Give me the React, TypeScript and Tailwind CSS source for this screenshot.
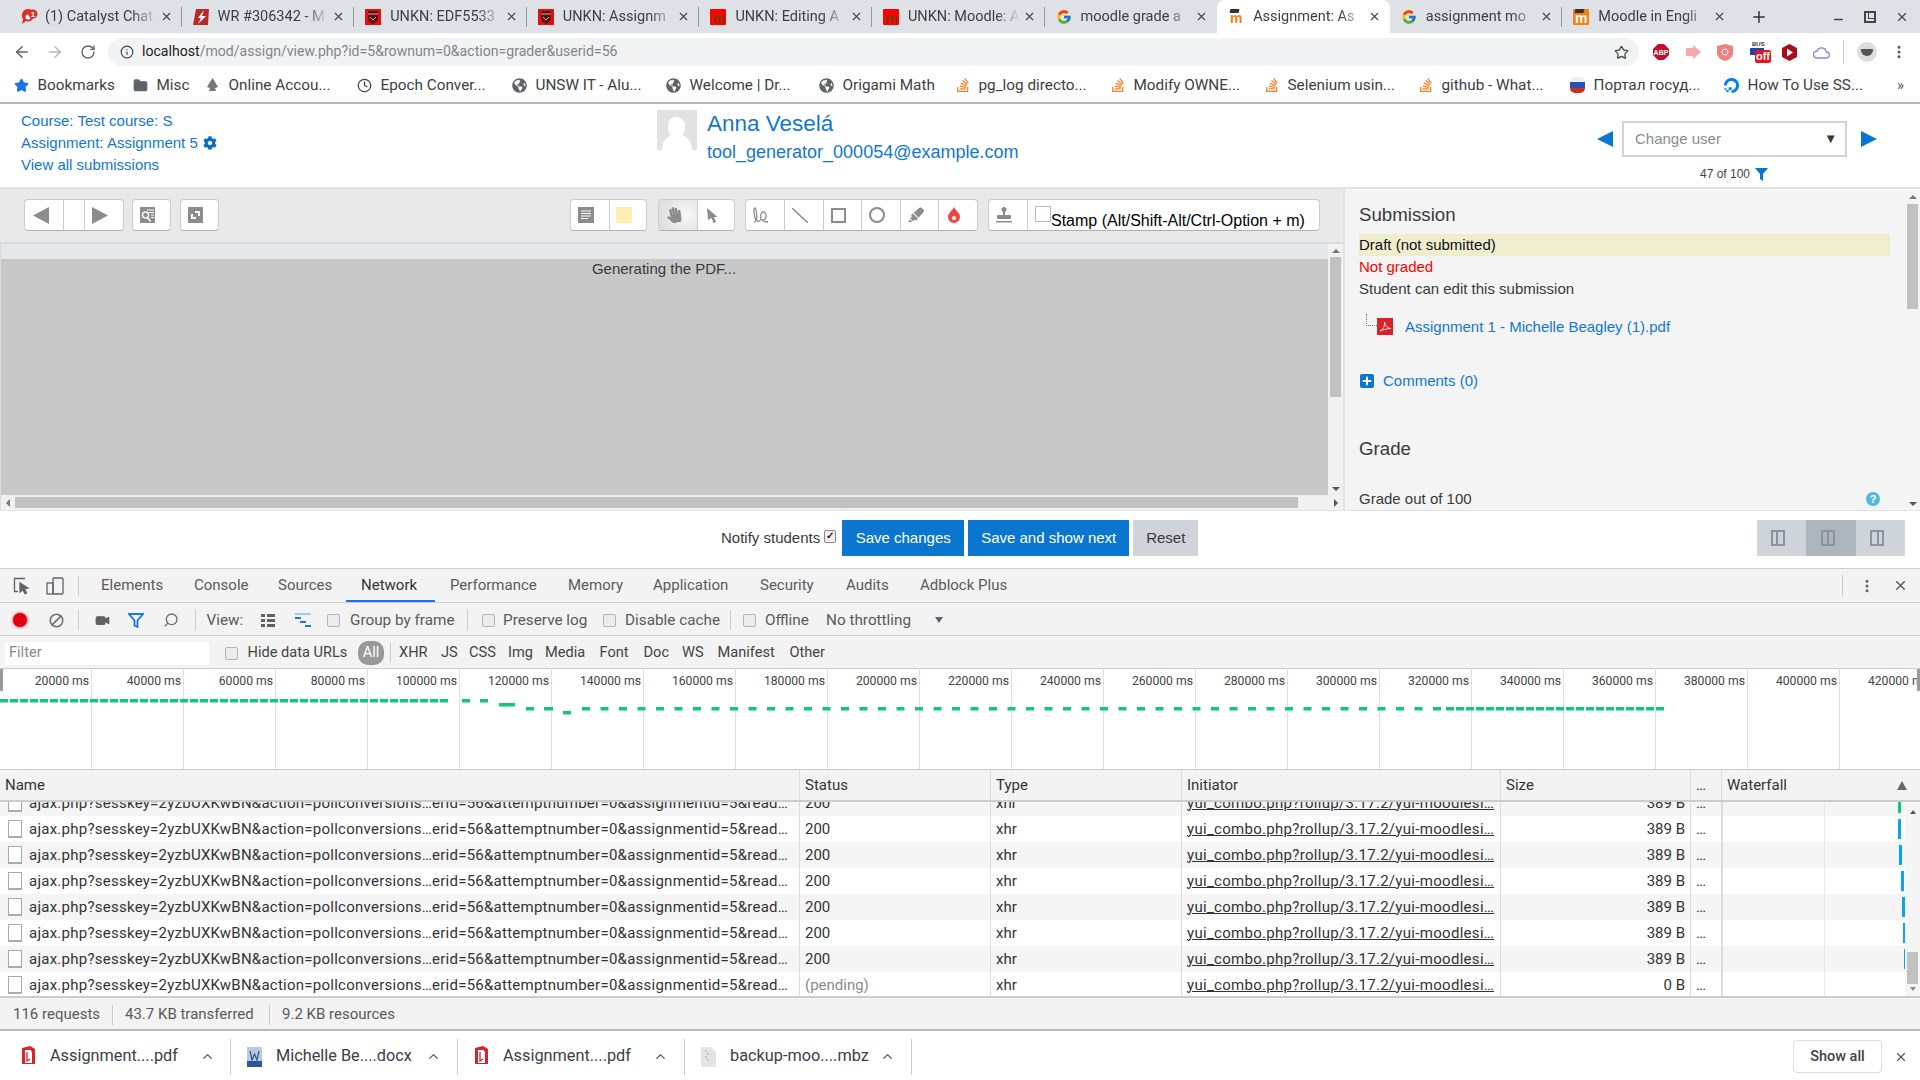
import React from 'react';
import {
  ArrowLeft,
  ArrowRight,
  RotateCw,
  Info,
  Star,
  Minus,
  X,
  Plus,
  MoreVertical,
  Folder,
  ChevronUp,
  Video,
  Search,
  Ban,
  Clock,
} from 'lucide-react';
import { FcGoogle } from 'react-icons/fc';
import { FaCog, FaGlobeAmericas, FaHandPaper, FaHighlighter, FaStackOverflow } from 'react-icons/fa';
import { SiDigitalocean } from 'react-icons/si';

const chrome = "[font-family:Roboto,'Noto_Sans',sans-serif]";
const arial = "[font-family:'Liberation_Sans',Arial,sans-serif]";

const Crest = () => (
  <svg width="16" height="16" viewBox="0 0 16 16">
    <rect width="16" height="16" fill="#e01010" />
    <path d="M3 2h10v7c0 3-3 5-5 6-2-1-5-3-5-6z" fill="#5a1010" />
    <path d="M3 5h10M5 8l3 3 3-3" stroke="#e8a0a0" strokeWidth="1" fill="none" />
  </svg>
);

const MoodleIcon = ({ bg, color, cap }: { bg: string; color: string; cap?: boolean }) => (
  <span className={`relative flex h-4 w-4 items-end justify-center rounded-[1px] ${bg}`}>
    <span className={`${arial} text-[14px] leading-[14px] font-bold ${color}`}>m</span>
    {cap && <span className="absolute top-0 left-[2px] h-[4px] w-[9px] -skew-x-12 bg-[#333]" />}
  </span>
);

const tabs: { title: string; icon: React.ReactNode; active?: boolean }[] = [
  {
    title: '(1) Catalyst Chat',
    icon: (
      <svg width="18" height="16" viewBox="0 0 18 16">
        <path d="M2 5a6 6 0 0 1 12 2 6 6 0 0 1-8 5l-4 3 1-5a6 6 0 0 1-1-5z" fill="#d9302c" />
        <circle cx="8" cy="8" r="2.500" fill="#fff" />
        <circle cx="13" cy="5" r="4.500" fill="#d9302c" />
        <text x="13" y="8" fontSize="8" fontWeight="700" fill="#fff" textAnchor="middle" fontFamily="Liberation Sans">1</text>
      </svg>
    ),
  },
  {
    title: 'WR #306342 - M',
    icon: (
      <svg width="16" height="16" viewBox="0 0 16 16">
        <path d="M3 0h13l-1 16H0z" fill="#b92b2b" />
        <path d="M11 1 5 9h3l-3 6 8-8H9z" fill="#fff" />
      </svg>
    ),
  },
  { title: 'UNKN: EDF5533', icon: <Crest /> },
  { title: 'UNKN: Assignm', icon: <Crest /> },
  { title: 'UNKN: Editing A', icon: <MoodleIcon bg="bg-[#f00]" color="text-[#7a3b00]" /> },
  { title: 'UNKN: Moodle: A', icon: <MoodleIcon bg="bg-[#f00]" color="text-[#7a3b00]" /> },
  { title: 'moodle grade a', icon: <FcGoogle size={16} /> },
  { title: 'Assignment: As', icon: <MoodleIcon bg="bg-white" color="text-[#f98012]" cap />, active: true },
  { title: 'assignment mo', icon: <FcGoogle size={16} /> },
  { title: 'Moodle in Engli', icon: <MoodleIcon bg="bg-[#f98012]" color="text-white" cap /> },
];

const Globe = () => <FaGlobeAmericas size={15} className="text-[#5f6368]" />;
const So = () => <FaStackOverflow size={16} className="text-[#f48024]" />;

const bookmarks: { w: number; label: string; icon: React.ReactNode }[] = [
  { w: 119, label: 'Bookmarks', icon: <Star size={15} className="fill-[#1a73e8] text-[#1a73e8]" /> },
  { w: 72, label: 'Misc', icon: <Folder size={15} className="fill-[#5f6368] text-[#5f6368]" /> },
  {
    w: 152,
    label: 'Online Accou...',
    icon: (
      <svg width="15" height="16" viewBox="0 0 15 16">
        <path d="M7.5 1 10 5l3 5-3 1 1 3H4l1-3-3-1 3-5z" fill="#777" />
      </svg>
    ),
  },
  { w: 155, label: 'Epoch Conver...', icon: <Clock size={15} className="text-[#444]" /> },
  { w: 154, label: 'UNSW IT - Alu...', icon: <Globe /> },
  { w: 153, label: 'Welcome | Dr...', icon: <Globe /> },
  { w: 136, label: 'Origami Math', icon: <Globe /> },
  { w: 155, label: 'pg_log directo...', icon: <So /> },
  { w: 154, label: 'Modify OWNE...', icon: <So /> },
  { w: 154, label: 'Selenium usin...', icon: <So /> },
  { w: 152, label: 'github - What...', icon: <So /> },
  {
    w: 154,
    label: 'Портал госуд...',
    icon: (
      <span className="flex h-4 w-[15px] flex-col overflow-hidden rounded-[5px]">
        <span className="flex-1 bg-[#eee]" />
        <span className="flex-1 bg-[#2a50b0]" />
        <span className="flex-1 bg-[#d52b1e]" />
      </span>
    ),
  },
  { w: 173, label: 'How To Use SS...', icon: <SiDigitalocean size={15} className="text-[#0080ff]" /> },
];

const TabStrip = () => (
  <div className={`${chrome} flex h-[33px] items-end bg-[#dee1e6] pl-[9px] text-[14.5px] text-[#3c4043]`}>
    {tabs.map((t, i) => (
      <div
        key={t.title}
        className={`flex h-[33px] w-[172.6px] shrink-0 items-center pr-[9px] pl-[11px] ${
          t.active ? 'rounded-t-[8px] bg-white' : ''
        } ${i < 9 && !t.active && !tabs[i + 1].active ? 'relative after:absolute after:top-[7px] after:right-0 after:h-[20px] after:w-px after:bg-[#999]' : 'relative'}`}
      >
        <span className="flex w-[25px] shrink-0 items-center">{t.icon}</span>
        <span className="flex-1 overflow-hidden whitespace-nowrap [mask-image:linear-gradient(to_right,black_78%,transparent)]">
          {t.title}
        </span>
        <X size={13} strokeWidth={2} className="ml-[3px] shrink-0 text-[#444]" />
      </div>
    ))}
    <div className="flex h-[33px] flex-1 items-center pl-[15px]">
      <Plus size={18} className="text-[#333]" />
      <div className="ml-auto flex items-center gap-[19px] pr-[11px]">
        <Minus size={13} strokeWidth={2.5} className="mt-[6px] text-[#444]" />
        <span className="relative h-[12px] w-[12px] border-2 border-[#444] after:absolute after:-top-[2px] after:left-[2px] after:h-[8px] after:w-[8px] after:border after:border-[#444]" />
        <X size={14} strokeWidth={2} className="text-[#444]" />
      </div>
    </div>
  </div>
);

const AddressBar = () => (
  <div className="flex h-[34px] items-center bg-white pt-[4px] pr-[13px] pl-[13px]">
    <ArrowLeft size={18} className="shrink-0 text-[#5f6368]" />
    <ArrowRight size={18} className="ml-[15px] shrink-0 text-[#b5b7ba]" />
    <RotateCw size={16} className="ml-[16px] shrink-0 text-[#5f6368]" />
    <div className={`${chrome} ml-[12px] flex h-[28px] min-w-0 flex-1 items-center rounded-full bg-[#f1f3f4] pr-[10px] pl-[12px] text-[14.1px]`}>
      <Info size={14} className="text-[#444]" />
      <span className="ml-[8px] text-[#202124]">localhost</span>
      <span className="text-[#80868b]">/mod/assign/view.php?id=5&amp;rownum=0&amp;action=grader&amp;userid=56</span>
      <Star size={15} className="ml-auto text-[#444]" />
    </div>
    <div className="ml-[14px] flex shrink-0 items-center">
      <svg width="16" height="16" viewBox="0 0 16 16">
        <path d="M5 0h6l5 5v6l-5 5H5l-5-5V5z" fill="#c70d2c" />
        <text x="8" y="11" fontSize="7" fontWeight="700" fill="#fff" textAnchor="middle" fontFamily="Liberation Sans">ABP</text>
      </svg>
      <svg className="ml-[17px]" width="15" height="14" viewBox="0 0 15 14">
        <path d="M0 3h7V0l8 7-8 7v-3H0z" fill="#f7a8a8" />
      </svg>
      <svg className="ml-[16px]" width="16" height="17" viewBox="0 0 16 17">
        <path d="M8 0l8 2v7c0 4-4 7-8 8-4-1-8-4-8-8V2z" fill="#f08080" />
        <circle cx="8" cy="8" r="3" fill="none" stroke="#fff" />
      </svg>
      <span className="relative ml-[17px] h-[22px] w-[21px]">
        <span className={`${arial} absolute top-0 left-[2px] text-[6px] leading-[7px] font-bold text-[#234]`}>BUS</span>
        <span className="absolute top-[7px] left-0 h-[7px] w-[14px] bg-[#1a47a8]" />
        <span className={`${arial} absolute right-0 bottom-0 rounded-[2px] bg-[#e8141c] px-[1px] text-[11px] leading-[13px] font-bold text-white`}>off</span>
      </span>
      <svg className="ml-[11px]" width="15" height="17" viewBox="0 0 15 17">
        <path d="M7.5 0 15 4v9l-7.5 4L0 13V4z" fill="#a80d1e" />
        <path d="M5 4.5v8l6-4z" fill="#fff" />
      </svg>
      <svg className="ml-[16px]" width="17" height="13" viewBox="0 0 17 13" fill="none" stroke="#8a86e8" strokeWidth="1.3">
        <path d="M4 12h9a3 3 0 0 0 .5-6A5 5 0 0 0 4 5a3.5 3.5 0 0 0 0 7z" />
      </svg>
      <span className="ml-[13px] h-[24px] w-px bg-[#ccc]" />
      <span className="ml-[13px] flex h-[20px] w-[20px] items-center justify-center rounded-full bg-[#ddd]">
        <span className="h-[7px] w-[12px] rounded-b-full bg-[#555]" />
      </span>
      <MoreVertical size={16} strokeWidth={2.5} className="ml-[14px] text-[#555]" />
    </div>
  </div>
);

const BookmarksBar = () => (
  <div className={`${chrome} flex h-[37px] items-center border-b-2 border-[#b8b8b8] pt-[1px] pl-[14px] text-[15.3px] text-[#3c4043]`}>
    {bookmarks.map((b) => (
      <div key={b.label} className="flex shrink-0 items-center" style={{ width: b.w }}>
        <span className="flex w-[23.5px] shrink-0 items-center">{b.icon}</span>
        <span className="whitespace-nowrap">{b.label}</span>
      </div>
    ))}
    <span className="text-[15px] text-[#555]">»</span>
  </div>
);

const MoodleHeader = () => (
  <div className={`${arial} flex h-[85px] border-b-2 border-[#e3e3e3] bg-white text-[15px] text-[#1177d1]`}>
    <div className="w-[657px] pt-[6px] pl-[21px] leading-[22px]">
      <div>Course: Test course: S</div>
      <div className="flex items-center gap-[5px]">
        Assignment: Assignment 5 <FaCog size={14} className="text-[#0a6cc4]" />
      </div>
      <div>View all submissions</div>
    </div>
    <div className="flex w-[940px] pt-[6px]">
      <div className="relative h-[40px] w-[40px] overflow-hidden bg-[#e2e2e2]">
        <span className="absolute top-[7px] left-[11px] h-[20px] w-[17px] rounded-full bg-white" />
        <span className="absolute top-[24px] left-[5px] h-[24px] w-[30px] rounded-t-full bg-white" />
      </div>
      <div className="ml-[10px]">
        <div className="text-[22.5px] leading-[28px] font-normal">Anna Veselá</div>
        <div className="mt-[2px] text-[18px] leading-[24px]">tool_generator_000054@example.com</div>
      </div>
    </div>
    <div className="w-[323px]">
      <div className="mt-[17px] flex items-center">
        <svg width="16" height="16" viewBox="0 0 16 16"><path d="M16 0v16L0 8z" fill="#0a76d0" /></svg>
        <div className="ml-[9px] flex h-[36px] w-[225px] items-center justify-between border-2 border-[#ced4da] pr-[8px] pl-[11px] text-[#868e96]">
          Change user
          <span className="text-[13px] text-[#333]">▼</span>
        </div>
        <svg className="ml-[14px]" width="16" height="16" viewBox="0 0 16 16"><path d="M0 0v16l16-8z" fill="#0a76d0" /></svg>
      </div>
      <div className="mt-[9px] flex items-center pl-[103px] text-[12px] leading-[16px] text-[#444]">
        47 of 100
        <svg className="ml-[5px]" width="13" height="13" viewBox="0 0 13 13"><path d="M0 0h13L8 6v7L5 11V6z" fill="#0a76d0" /></svg>
      </div>
    </div>
  </div>
);

const ToolGroup = ({ cells, className = '' }: { cells: { w: number; node: React.ReactNode; on?: boolean; flat?: boolean }[]; className?: string }) => (
  <div className={`flex h-[32px] overflow-hidden rounded-[4px] border border-[#ccc] border-b-[#b0b0b0] bg-white ${className}`}>
    {cells.map((c, i) => (
      <div
        key={i}
        className={`flex h-full items-center justify-center ${c.flat ? '' : 'pr-[8px]'} ${i > 0 ? 'border-l border-[#ccc]' : ''} ${
          c.on ? 'bg-[radial-gradient(circle_at_70%_50%,#f8f8f8,#dadada)]' : ''
        }`}
        style={{ width: c.w }}
      >
        {c.node}
      </div>
    ))}
  </div>
);

const G = '#8c8c8c';

const PdfToolbar = () => (
  <div className="flex h-[53px] items-start bg-[#e9e9e9] pt-[10px] pl-[24px]">
    <ToolGroup
      cells={[
        { w: 38, flat: true, node: <svg className="mr-[7px]" width="16" height="17" viewBox="0 0 16 17"><path d="M16 0v17L0 8.500z" fill={G} /></svg> },
        { w: 21, flat: true, node: null },
        { w: 39, node: <svg width="16" height="17" viewBox="0 0 16 17"><path d="M0 0v17l16-8.500z" fill={G} /></svg> },
      ]}
    />
    <ToolGroup
      className="ml-[8px]"
      cells={[
        {
          w: 37,
          node: (
            <svg width="15" height="16" viewBox="0 0 15 16">
              <rect width="15" height="16" fill={G} />
              <path d="M7 3h7M9 5.500h5M11 8h3M11 10.500h3" stroke="#fff" />
              <circle cx="5.500" cy="8" r="3" fill="none" stroke="#fff" strokeWidth="1.400" />
              <path d="M7.500 10.500l3 4" stroke="#fff" strokeWidth="1.400" />
            </svg>
          ),
        },
      ]}
    />
    <ToolGroup
      className="ml-[9px]"
      cells={[
        {
          w: 37,
          node: (
            <svg width="15" height="16" viewBox="0 0 15 16">
              <rect width="15" height="16" fill={G} />
              <path d="M7 5h4v4M8 11H4V7" stroke="#fff" strokeWidth="2" fill="none" />
            </svg>
          ),
        },
      ]}
    />
    <ToolGroup
      className="ml-[351px]"
      cells={[
        {
          w: 38,
          node: (
            <svg width="16" height="16" viewBox="0 0 16 16">
              <rect width="16" height="16" fill={G} />
              <path d="M3 4h10M3 6.500h10M3 9h10M3 11.500h7" stroke="#fff" />
            </svg>
          ),
        },
        { w: 37, node: <span className="h-[16px] w-[16px] bg-[#ffeeb0]" /> },
      ]}
    />
    <ToolGroup
      className="ml-[11px]"
      cells={[
        { w: 38, on: true, node: <FaHandPaper size={16} className="-rotate-12 text-[#8c8c8c]" /> },
        { w: 37, node: <svg width="11" height="15" viewBox="0 0 11 15"><path d="M0 0l10.500 9H7l2 5-2.500 1-2-5L1 12z" fill={G} /></svg> },
      ]}
    />
    <ToolGroup
      className="ml-[10px]"
      cells={[
        {
          w: 38,
          node: (
            <svg width="16" height="16" viewBox="0 0 16 16" fill="none" stroke={G} strokeWidth="1.300">
              <path d="M1 15c2.500 0 3-4 2.600-8C3.300 3 3 1 1.800 1S.7 6 2 10.500c.8 2.500 3 4.500 4.500 3.500S8 11 7.800 9c-.3-2 .7-4 2.700-4s3 2.500 2.500 5-3 4-4.500 2.500c2 2 5 2.500 6.500 2.500" />
            </svg>
          ),
        },
        { w: 39, node: <svg width="16" height="15" viewBox="0 0 16 15"><path d="M0 0l16 15" stroke={G} strokeWidth="1.500" /></svg> },
        { w: 38, node: <span className="h-[15px] w-[15px] border-2 border-[#8c8c8c]" /> },
        { w: 39, node: <span className="h-[16px] w-[16px] rounded-full border-2 border-[#8c8c8c]" /> },
        { w: 38, node: <FaHighlighter size={16} className="text-[#8c8c8c]" /> },
        {
          w: 39,
          node: (
            <svg width="12" height="16" viewBox="0 0 12 16">
              <path d="M6 0c2 4 6 6 6 10a6 6 0 0 1-12 0C0 6 4 4 6 0z" fill="#f24545" />
              <circle cx="6" cy="11" r="2" fill="#fff" />
            </svg>
          ),
        },
      ]}
    />
    <ToolGroup
      className={`ml-[10px] ${arial}`}
      cells={[
        {
          w: 38,
          node: (
            <svg width="16" height="16" viewBox="0 0 16 16" fill={G}>
              <circle cx="8" cy="2.500" r="2.500" />
              <rect x="7" y="4" width="2" height="4" />
              <rect x="1" y="8" width="14" height="4" rx="1" />
              <rect y="14" width="16" height="1.500" />
            </svg>
          ),
        },
        {
          w: 292,
          flat: true,
          node: (
            <div className="flex h-full w-full items-start pl-[7px] text-[16px] text-black">
              <span className="mt-[6px] h-[16px] w-[16px] shrink-0 border border-[#bbb]" />
              <span className="mt-[12px] leading-[18px] whitespace-nowrap">Stamp (Alt/Shift-Alt/Ctrl-Option + m)</span>
            </div>
          ),
        },
      ]}
    />
  </div>
);

const PdfArea = () => (
  <div className="relative flex h-[268px] flex-col border-t-2 border-l border-[#dcdcdc] bg-[#e5e8eb]">
    <div className="mt-[15px] flex h-[236px] w-[1327px] justify-center bg-[#c8c8c8]">
      <span className={`${arial} mr-[1px] text-[15px] leading-[20px] text-[#373a3c]`}>Generating the PDF...</span>
    </div>
    {/* vertical scrollbar */}
    <div className="absolute top-0 right-0 flex h-[252px] w-[15px] flex-col items-center bg-[#f1f1f1]">
      <span className="mt-[5px] border-x-[4px] border-b-[4px] border-x-transparent border-b-[#777]" />
      <span className="mt-[4px] h-[140px] w-[11px] bg-[#c1c1c1]" />
      <span className="mt-auto mb-[5px] border-x-[4px] border-t-[4px] border-x-transparent border-t-[#555]" />
    </div>
    {/* horizontal scrollbar */}
    <div className="absolute right-0 bottom-0 left-0 flex h-[15px] items-center bg-[#f1f1f1] px-[5px]">
      <span className="border-y-[4px] border-r-[4px] border-y-transparent border-r-[#777]" />
      <span className="mx-[5px] h-[11px] w-[1283px] bg-[#c1c1c1]" />
      <span className="ml-auto border-y-[4px] border-l-[4px] border-y-transparent border-l-[#555]" />
    </div>
  </div>
);

const SidePanel = () => (
  <div className={`${arial} relative h-[321px] w-[577px] overflow-hidden border-l-2 border-[#e3e3e3] bg-[#f4f4f4] pl-[14px] text-[15px] text-[#373a3c]`}>
    <div className="pt-[13px] text-[18.7px] leading-[26px]">Submission</div>
    <div className="mt-[6px] h-[22px] w-[531px] bg-[#eeeecf] leading-[22px] text-[#111]">Draft (not submitted)</div>
    <div className="leading-[22px] text-[#f00]">Not graded</div>
    <div className="leading-[22px]">Student can edit this submission</div>
    <div className="relative mt-[15.5px] flex h-[24px] items-center pl-[46px] text-[#1177d1]">
      <span className="absolute top-[-2px] left-[7px] h-[12px] w-[11px] border-b border-l border-dotted border-[#777]" />
      <svg className="absolute top-[2px] left-[18px]" width="16" height="17" viewBox="0 0 16 17">
        <rect width="16" height="17" fill="#d8232a" />
        <path d="M3 13c3-1 5-5 4.500-9 1 4 3 6 6 6.500-3 0-7 1-10.500 2.500z" fill="none" stroke="#fff" strokeWidth="0.8" />
      </svg>
      Assignment 1 - Michelle Beagley (1).pdf
    </div>
    <div className="mt-[29.5px] flex h-[24px] items-center pl-[1px] text-[#1177d1]">
      <span className="flex h-[14px] w-[14px] items-center justify-center rounded-[2px] bg-[#0a76d0]">
        <Plus size={12} strokeWidth={4} className="text-white" />
      </span>
      <span className="ml-[9px]">Comments (0)</span>
    </div>
    <div className="mt-[43px] text-[18.7px] leading-[26px]">Grade</div>
    <div className="mt-[26px] flex w-[521px] items-center justify-between leading-[22px]">
      Grade out of 100
      <span className="flex h-[14px] w-[14px] items-center justify-center rounded-full bg-[#4fb8dc] text-[11px] leading-none font-bold text-white">?</span>
    </div>
    <div className="absolute top-0 right-0 flex h-full w-[15px] flex-col items-center">
      <span className="mt-[6px] border-x-[4px] border-b-[4px] border-x-transparent border-b-[#777]" />
      <span className="mt-[5px] h-[105px] w-[11px] bg-[#c1c1c1]" />
      <span className="mt-auto mb-[4px] border-x-[4px] border-t-[4px] border-x-transparent border-t-[#555]" />
    </div>
  </div>
);

const LayoutIcon = ({ line }: { line: string }) => (
  <span className="relative block h-[16px] w-[14px] border-2 border-[#8c939a]">
    <span className={`absolute top-0 bottom-0 w-[2px] bg-[#8c939a] ${line}`} />
  </span>
);

const FormFooter = () => (
  <div className={`${arial} flex h-[58px] items-center border-t border-[#e3e3e3] bg-white pb-[3px] text-[15px]`}>
    <span className="ml-[721px] text-[#373a3c]">Notify students</span>
    <span className="mb-[4px] ml-[4px] flex h-[13px] w-[12px] items-center justify-center rounded-[2px] border border-[#888] bg-[#eee] text-[10px] leading-none font-bold text-[#222]">✓</span>
    <button className="ml-[6px] h-[36px] w-[122px] bg-[#0a76d0] text-white">Save changes</button>
    <button className="ml-[4px] h-[36px] w-[161px] bg-[#0a76d0] text-white">Save and show next</button>
    <button className="ml-[4px] h-[36px] w-[65px] bg-[#ced4da] text-[#373a3c]">Reset</button>
    <div className="ml-[559px] flex h-[36px]">
      <span className="flex w-[49px] items-center justify-center bg-[#ced4da] pr-[7px]"><LayoutIcon line="left-[3px]" /></span>
      <span className="flex w-[50px] items-center justify-center bg-[#adb5bd] pr-[7px]"><LayoutIcon line="left-[4px]" /></span>
      <span className="flex w-[49px] items-center justify-center bg-[#ced4da] pr-[7px]"><LayoutIcon line="right-[3px]" /></span>
    </div>
  </div>
);

const DevTabs = () => {
  const items = [
    ['Elements', 101],
    ['Console', 194],
    ['Sources', 278],
    ['Network', 361],
    ['Performance', 450],
    ['Memory', 568],
    ['Application', 653],
    ['Security', 760],
    ['Audits', 846],
    ['Adblock Plus', 920],
  ] as const;
  return (
    <div className="flex h-[35px] items-center border-y border-[#ccc] pl-[13px] text-[15px] text-[#5a5a5a]">
      <svg width="18" height="18" viewBox="0 0 18 18" fill="none" stroke="#5f6368" strokeWidth="1.3">
        <path d="M12 1.500H1.500v13H5" />
        <path d="M7 6l8 5-3.500 1 2 4-1.500.7-2-4L7 15z" fill="#5f6368" />
      </svg>
      <svg className="ml-[15px]" width="18" height="18" viewBox="0 0 18 18" fill="none" stroke="#5f6368" strokeWidth="1.3">
        <rect x="7" y="1" width="10" height="16" rx="1" />
        <rect x="1" y="6" width="6" height="11" />
      </svg>
      <span className="ml-[14px] h-[20px] w-px bg-[#ccc]" />
      <div className="ml-[22px] flex h-full">
        {items.map(([label], i) => {
          const next = i < items.length - 1 ? items[i + 1][1] : items[i][1] + 110;
          const on = label === 'Network';
          return (
            <div
              key={label}
              className={`relative flex h-full items-center whitespace-nowrap ${on ? 'text-[#333] after:absolute after:-left-[15px] after:bottom-0 after:h-[2px] after:w-[89px] after:bg-[#1a73e8]' : ''}`}
              style={{ width: next - items[i][1] }}
            >
              {label}
            </div>
          );
        })}
      </div>
      <div className="ml-auto flex items-center pr-[12px]">
        <span className="h-[22px] w-px bg-[#ccc]" />
        <MoreVertical size={16} strokeWidth={2.5} className="ml-[16px] text-[#5f6368]" />
        <X size={15} strokeWidth={2.5} className="ml-[18px] text-[#5f6368]" />
      </div>
    </div>
  );
};

const Cb = ({ className = '' }: { className?: string }) => (
  <span className={`inline-block h-[13px] w-[13px] shrink-0 rounded-[2px] border border-[#b5b5b5] bg-[#ececec] ${className}`} />
);

const Sep = ({ className = '' }: { className?: string }) => <span className={`h-[20px] w-px shrink-0 bg-[#ccc] ${className}`} />;

const NetToolbar = () => (
  <div className="flex h-[33px] items-center border-b border-[#ccc] pt-[2px] text-[15.3px] whitespace-nowrap text-[#5a5a5a]">
    <span className="ml-[13px] h-[14px] w-[14px] shrink-0 rounded-full bg-[#e3000f] shadow-[0_0_3px_#e3000f]" />
    <Ban size={15} strokeWidth={2.5} className="ml-[21.5px] shrink-0 -scale-x-100 text-[#6e6e6e]" />
    <Sep className="ml-[14.5px]" />
    <Video size={15} className="ml-[15.5px] shrink-0 fill-[#5f6368] text-[#5f6368]" />
    <svg className="ml-[18.5px] shrink-0" width="16" height="16" viewBox="0 0 16 16" fill="none" stroke="#1a73e8" strokeWidth="1.800">
      <path d="M1 2h14L9.500 8.500V15l-3-1.500v-5z" />
    </svg>
    <Search size={16} className="ml-[19px] shrink-0 -scale-x-100 text-[#6e6e6e]" />
    <Sep className="ml-[15.5px]" />
    <span className="ml-[11px] w-[54px] shrink-0">View:</span>
    <svg width="14" height="14" viewBox="0 0 14 14" fill="#5f6368" className="ml-[0.5px] shrink-0">
      <path d="M0 1h4v3H0zM6 1h8v3H6zM0 6h4v3H0zM6 6h8v3H6zM0 11h4v3H0zM6 11h8v3H6z" />
    </svg>
    <svg width="16" height="14" viewBox="0 0 16 14" className="ml-[20px] shrink-0">
      <path d="M0 0h16v2H0z" fill="#a8c7f0" />
      <path d="M0 4h6v2H0zM5 8h6v2H5zM10 12h6v2h-6z" fill="#1a73e8" />
    </svg>
    <Cb className="ml-[16px]" />
    <span className="ml-[10px] w-[117px] shrink-0">Group by frame</span>
    <Sep />
    <Cb className="ml-[14px]" />
    <span className="ml-[8px] w-[100px] shrink-0">Preserve log</span>
    <Cb />
    <span className="ml-[9px] w-[104.6px] shrink-0">Disable cache</span>
    <Sep />
    <Cb className="ml-[12.4px]" />
    <span className="ml-[9px] w-[61px] shrink-0">Offline</span>
    <span className="w-[109px] shrink-0">No throttling</span>
    <span className="border-x-[4px] border-t-[6px] border-x-transparent border-t-[#5f6368]" />
  </div>
);

const filterTypes: [string, number][] = [
  ['XHR', 42],
  ['JS', 28],
  ['CSS', 39],
  ['Img', 37],
  ['Media', 54.5],
  ['Font', 44],
  ['Doc', 38.5],
  ['WS', 35.5],
  ['Manifest', 72],
  ['Other', 50],
];

const FilterRow = () => (
  <div className="flex h-[32px] items-center pt-[2px] text-[14.6px] whitespace-nowrap text-[#444]">
    <span className="ml-[5px] flex h-[23px] w-[204px] shrink-0 items-center bg-white pl-[4px] text-[#888]">Filter</span>
    <Cb className="ml-[16px]" />
    <span className="ml-[9.5px] w-[110.5px] shrink-0">Hide data URLs</span>
    <span className="flex h-[24px] w-[26px] shrink-0 items-center justify-center rounded-[10px] bg-[#999] text-white">All</span>
    <Sep className="ml-[6px]" />
    <div className="ml-[8px] flex">
      {filterTypes.map(([f, w]) => (
        <span key={f} style={{ width: w }}>{f}</span>
      ))}
    </div>
  </div>
);

const dense = (from: number, to: number, y: number) => {
  const out: React.ReactNode[] = [];
  for (let x = from; x < to; x += 10) out.push(<rect key={`d${y}${x}`} x={x} y={y} width="8" height="3.500" />);
  return out;
};

const sparse = (from: number, to: number, y: number) => {
  const out: React.ReactNode[] = [];
  for (let x = from; x < to; x += 18.500) out.push(<rect key={`s${y}${x}`} x={x} y={y} width="8" height="3.500" />);
  return out;
};

const Overview = () => (
  <div className="relative h-[102px] border-y border-[#ccc] bg-white">
    <div className="flex h-full overflow-hidden">
      {Array.from({ length: 21 }, (_, i) => (
        <div
          key={i}
          className="h-full w-[92px] shrink-0 border-r border-[#e0e0e0] pt-[3px] pr-[2px] text-right text-[12.2px] leading-[18px] whitespace-nowrap text-[#444]"
        >
          {(i + 1) * 20000} ms
        </div>
      ))}
    </div>
    <span className="absolute top-0 left-0 h-[22px] w-[3px] bg-[#9a9a9a]" />
    <span className="absolute top-0 right-0 h-[22px] w-[3px] bg-[#9a9a9a]" />
    <svg className="absolute top-0 left-0" width="1920" height="100" fill="#0fc97a">
      {dense(0, 450, 30)}
      <rect x="462" y="30" width="8" height="3.500" />
      <rect x="480" y="30" width="8" height="3.500" />
      <rect x="499" y="34" width="16" height="3.500" />
      <rect x="526" y="38" width="8" height="3.500" />
      <rect x="544" y="38" width="9" height="3.500" />
      <rect x="563" y="42" width="8" height="3.500" />
      {sparse(582, 1440, 38)}
      {dense(1446, 1662, 38)}
    </svg>
  </div>
);

const cols = 'grid grid-cols-[800px_191px_191px_319px_190px_31px_1fr]';
const cell = 'border-r border-[#dcdcdc] overflow-hidden whitespace-nowrap';

const NetHeader = () => (
  <div className={`${cols} h-[32px] items-center border-b-2 border-[#ccc] text-[15px] text-[#333]`}>
    {['Name', 'Status', 'Type', 'Initiator', 'Size', '…'].map((h) => (
      <div key={h} className={`${cell} flex h-full items-center pl-[5px]`}>
        {h}
      </div>
    ))}
    <div className="flex h-full items-center justify-between pr-[13px] pl-[5px]">
      Waterfall
      <span className="border-x-[5px] border-b-[9px] border-x-transparent border-b-[#666]" />
    </div>
  </div>
);

const ticks = [175, 175, 176, 178, 179, 180, 181, 182];

const NetRows = () => (
  <div className="relative h-[196px] overflow-hidden border-b-2 border-[#ccc] bg-white text-[15px] text-[#333]">
    {ticks.map((t, i) => {
      const pending = i === 7;
      return (
        <div
          key={i}
          className={`${cols} h-[26px] items-center ${i === 0 ? '-mt-[12px]' : ''} ${i % 2 === 0 ? 'bg-[#f5f5f5]' : 'bg-white'}`}
        >
          <div className={`${cell} flex h-full items-center pl-[8px]`}>
            <span className="h-[18px] w-[14px] shrink-0 border border-b-2 border-[#aaa] bg-white" />
            <span className="ml-[7px] tracking-[0.25px]">
              ajax.php?sesskey=2yzbUXKwBN&amp;action=pollconversions…erid=56&amp;attemptnumber=0&amp;assignmentid=5&amp;read…
            </span>
          </div>
          <div className={`${cell} flex h-full items-center pl-[5px] ${pending ? 'text-[#8a8a8a]' : ''}`}>{pending ? '(pending)' : '200'}</div>
          <div className={`${cell} flex h-full items-center pl-[5px]`}>xhr</div>
          <div className={`${cell} flex h-full items-center pl-[5px] tracking-[0.3px] underline`}>yui_combo.php?rollup/3.17.2/yui-moodlesi…</div>
          <div className={`${cell} flex h-full items-center justify-end pr-[5px]`}>{pending ? '0 B' : '389 B'}</div>
          <div className={`${cell} flex h-full items-center pl-[5px]`}>…</div>
          <div className="relative h-full border-l border-[#ddd]">
            <span className="absolute top-0 bottom-0 left-[101px] w-px bg-[#e8e8e8]" />
            {!pending && (
              <span
                className={`absolute top-[3px] h-[20px] w-[2.500px] ${i === 0 ? 'bg-[#0fc97a]' : 'bg-[#0aa5f0]'}`}
                style={{ left: t }}
              />
            )}
          </div>
        </div>
      );
    })}
    <div className="absolute top-0 right-0 flex h-full w-[15px] flex-col items-center bg-[#f5f5f5]">
      <span className="mt-[8px] border-x-[3.500px] border-b-[4px] border-x-transparent border-b-[#555]" />
      <span className="mt-auto h-[32px] w-[11px] bg-[#c1c1c1]" />
      <span className="mt-[3px] mb-[5px] border-x-[3.500px] border-t-[4px] border-x-transparent border-t-[#888]" />
    </div>
  </div>
);

const StatusBar = () => (
  <div className="flex h-[33px] items-center border-b-2 border-[#bbb] pt-[2px] pl-[13px] text-[15px] whitespace-nowrap text-[#5a5a5a]">
    <span className="w-[87px]">116 requests</span>
    <Sep className="ml-[12px]" />
    <span className="ml-[12px] w-[132px]">43.7 KB transferred</span>
    <Sep className="ml-[12px]" />
    <span className="ml-[12px]">9.2 KB resources</span>
  </div>
);

const PdfFile = () => (
  <svg width="14" height="21" viewBox="0 0 14 21">
    <path d="M1 2 9 0l5 3v15H1z" fill="#d8232a" />
    <path d="M4 4h6l1 3v10H4z" fill="#fff" />
    <path d="M6 6v9l3-2" stroke="#d8232a" strokeWidth="1.300" fill="none" />
  </svg>
);

const downloads: { label: string; icon: React.ReactNode }[] = [
  { label: 'Assignment....pdf', icon: <PdfFile /> },
  {
    label: 'Michelle Be....docx',
    icon: (
      <svg width="15" height="20" viewBox="0 0 15 20">
        <rect width="15" height="20" fill="#b9c9de" />
        <rect y="14" width="15" height="6" fill="#2b5797" />
        <path d="M3 4l2 9 2.500-6 2.500 6 2-9" stroke="#2b5797" strokeWidth="1.200" fill="none" />
      </svg>
    ),
  },
  { label: 'Assignment....pdf', icon: <PdfFile /> },
  {
    label: 'backup-moo....mbz',
    icon: (
      <svg width="15" height="20" viewBox="0 0 15 20">
        <path d="M0 0h10l5 5v15H0z" fill="#e4e4e4" />
        <path d="M4 4h2M6 7h2M4 10h2M6 13h2" stroke="#aaa" />
      </svg>
    ),
  },
];

const DownloadShelf = () => (
  <div className={`${chrome} flex h-[49px] items-center bg-white pt-[2px] text-[16.3px] text-[#3c4043]`}>
    {downloads.map((d, i) => (
      <div key={i} className="flex h-[36px] w-[227px] shrink-0 items-center border-r border-[#ccc] pl-[16px] first:w-[231px] first:pl-[21px]">
        <span className="flex w-[29px] shrink-0 items-center">{d.icon}</span>
        <span className="w-[150px] whitespace-nowrap">{d.label}</span>
        <ChevronUp size={15} className="text-[#555]" />
      </div>
    ))}
    <div className="ml-auto flex items-center pr-[12px]">
      <span className="flex h-[33px] w-[89px] items-center justify-center rounded-[4px] border border-[#ddd] text-[14.5px] font-medium text-[#444]">Show all</span>
      <X size={14} strokeWidth={2} className="ml-[12px] text-[#555]" />
    </div>
  </div>
);

export default function App() {
  return (
    <div className="flex h-[1080px] w-[1920px] flex-col overflow-hidden bg-white">
      <TabStrip />
      <AddressBar />
      <BookmarksBar />
      <MoodleHeader />
      <div className="flex">
        <div className="w-[1343px] shrink-0">
          <PdfToolbar />
          <PdfArea />
        </div>
        <SidePanel />
      </div>
      <FormFooter />
      <div className={`${chrome} bg-[#f3f3f3] text-[14px]`}>
        <DevTabs />
        <NetToolbar />
        <FilterRow />
        <Overview />
        <NetHeader />
        <NetRows />
        <StatusBar />
      </div>
      <DownloadShelf />
    </div>
  );
}
